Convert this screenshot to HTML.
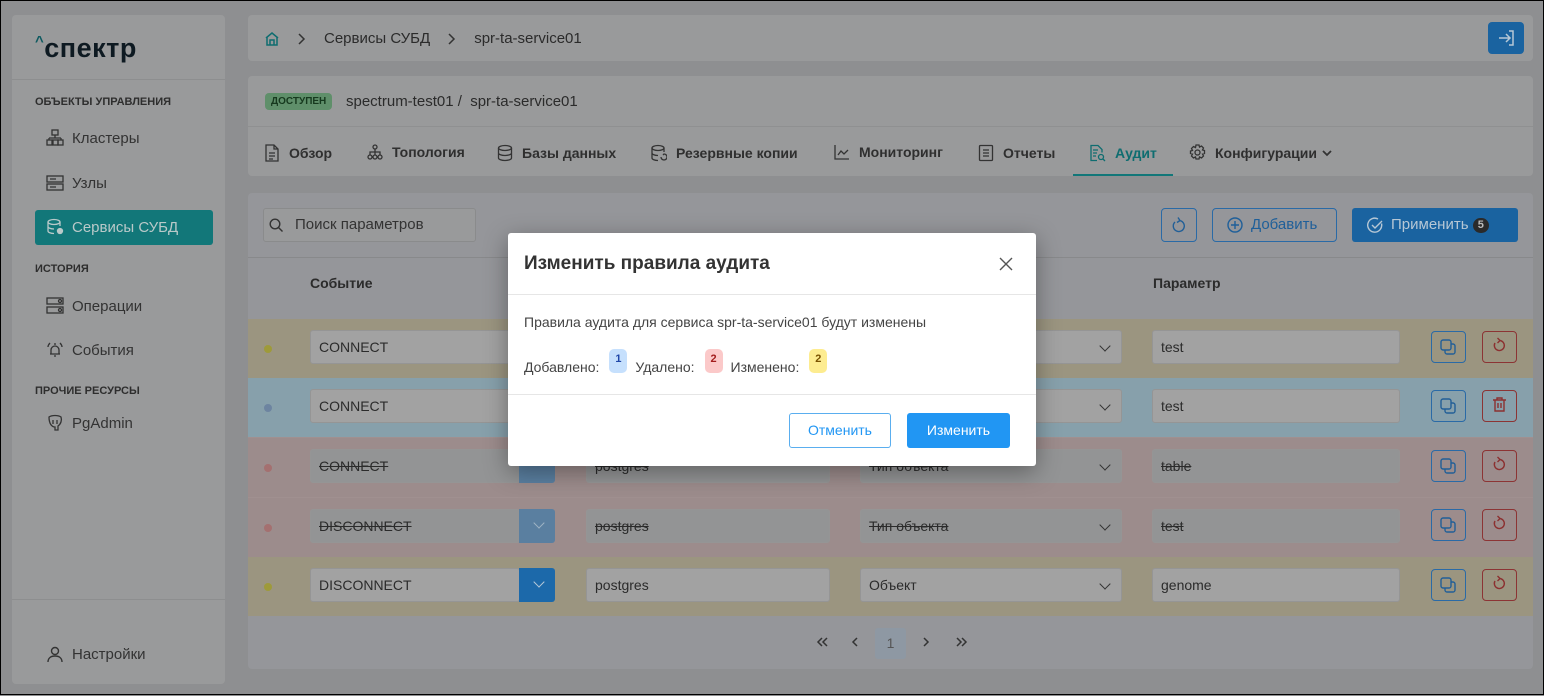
<!DOCTYPE html>
<html><head><meta charset="utf-8"><style>
*{box-sizing:border-box;margin:0;padding:0}
body{width:1544px;height:695px;overflow:hidden;background:#8e8f91;font-family:"Liberation Sans",sans-serif;color:#2b2b2b;position:relative;border:1px solid #000}
.a{position:absolute}
.card{position:absolute;background:#999a9b;border-radius:4px}
.sb-item{position:absolute;left:45px;font-size:15px;color:#333;display:flex;align-items:center;gap:8px}
.sec{position:absolute;left:34px;font-size:11px;font-weight:bold;color:#2e2e2e}
.tab{position:absolute;top:143px;font-size:14px;font-weight:bold;color:#2f2f2f;display:flex;align-items:center;gap:9px}
.tab svg{fill:none;stroke:#333;stroke-width:1.3}
.row{position:absolute;left:247px;width:1285px}
.inp{position:absolute;height:34px;background:#a2a2a2;border:1px solid #959595;border-radius:3px;font-size:14px;line-height:32px;padding-left:8px;color:#2b2b2b}
.del{background:#939495;text-decoration:line-through}
.dot{position:absolute;left:16px;width:8px;height:8px;border-radius:50%}
.dd{position:absolute;width:36px;height:34px;border-radius:0 3px 3px 0}
.ib{position:absolute;width:35px;height:32px;border-radius:4px;border:1px solid #2a6aa6}
.ibr{border-color:#8c3434}
.chev{position:absolute;right:12px;top:11px;width:8px;height:8px;border-right:1.5px solid #333;border-bottom:1.5px solid #333;transform:rotate(45deg)}
</style></head><body>
<!-- sidebar -->
<div class="card" style="left:11px;top:14px;width:213px;height:669px">
 <div class="a" style="left:23px;top:18px;font-size:27px;font-weight:bold;color:#0e1a22;letter-spacing:0.5px"><span style="font-size:15px;vertical-align:top;position:relative;top:0px;color:#0e5a60">^</span>спектр</div>
 <div class="a" style="left:0;top:64px;width:213px;height:1px;background:#8d8e8f"></div>
 <div class="a" style="left:0;top:584px;width:213px;height:1px;background:#8d8e8f"></div>
</div>
<div class="sec" style="top:95px">ОБЪЕКТЫ УПРАВЛЕНИЯ</div>
<div class="sb-item" style="top:128px"><svg width="18" height="18" viewBox="0 0 18 18" fill="none" stroke="#333" stroke-width="1.3"><rect x="6" y="1" width="6" height="5"/><path d="M9 6v3M3 9h12M3 9v2M15 9v2"/><rect x="1" y="11" width="5" height="5"/><rect x="7" y="11" width="5" height="5"/><rect x="12" y="11" width="5" height="5"/></svg>Кластеры</div>
<div class="sb-item" style="top:173px"><svg width="18" height="18" viewBox="0 0 18 18" fill="none" stroke="#333" stroke-width="1.3"><rect x="1" y="2" width="16" height="6"/><rect x="1" y="10" width="16" height="6"/><path d="M4 5h6M4 13h6"/></svg>Узлы</div>
<div class="a" style="left:34px;top:209px;width:178px;height:35px;background:#127779;border-radius:3px"></div>
<div class="sb-item" style="top:217px;color:#b9c9c9"><svg width="18" height="18" viewBox="0 0 18 18" fill="none" stroke="#b9c9c9" stroke-width="1.3"><ellipse cx="8" cy="4" rx="6" ry="2.5"/><path d="M2 4v9c0 1.4 2.7 2.5 6 2.5M14 4v4M2 8.5c0 1.4 2.7 2.5 6 2.5"/><circle cx="14" cy="13" r="2.5" fill="#b9c9c9"/></svg>Сервисы СУБД</div>
<div class="sec" style="top:262px">ИСТОРИЯ</div>
<div class="sb-item" style="top:296px"><svg width="18" height="18" viewBox="0 0 18 18" fill="none" stroke="#333" stroke-width="1.3"><rect x="1" y="1" width="16" height="6"/><rect x="1" y="10" width="16" height="6"/><circle cx="14" cy="4" r="1.5"/><circle cx="14" cy="13" r="1.5"/></svg>Операции</div>
<div class="sb-item" style="top:340px"><svg width="18" height="18" viewBox="0 0 18 18" fill="none" stroke="#333" stroke-width="1.3"><path d="M5 13V9a4 4 0 0 1 8 0v4M4 13h10M8 15h2M2 6c0-2 1-3 2-4M16 6c0-2-1-3-2-4M9 2v2"/></svg>События</div>
<div class="sec" style="top:384px">ПРОЧИЕ РЕСУРСЫ</div>
<div class="sb-item" style="top:413px"><svg width="18" height="18" viewBox="0 0 18 18" fill="none" stroke="#333" stroke-width="1.3"><path d="M3 3c3-2 9-2 12 0 1 3 0 7-3 9v4h-3v-3c-3 0-6-3-6-10zM7 6v4M11 6v4"/></svg>PgAdmin</div>
<div class="sb-item" style="top:644px"><svg width="18" height="18" viewBox="0 0 18 18" fill="none" stroke="#333" stroke-width="1.4"><circle cx="9" cy="6" r="3.5"/><path d="M2 17c0-4 3-6 7-6s7 2 7 6"/></svg>Настройки</div>

<!-- breadcrumb -->
<div class="card" style="left:247px;top:14px;width:1285px;height:46px"></div>
<div class="a" style="left:263px;top:29px;display:flex;align-items:center;gap:16px;font-size:15px;color:#2b2b2b">
 <svg width="16" height="16" viewBox="0 0 16 16" fill="none" stroke="#0f6d70" stroke-width="1.5"><path d="M2 7l6-5 6 5M3 6v8h10V6M6 14V9h4v5"/></svg>
 <svg width="12" height="14" viewBox="0 0 12 14" fill="none" stroke="#333" stroke-width="1.5"><path d="M3 2l5 5-5 5"/></svg><span>Сервисы СУБД</span><svg width="12" height="14" viewBox="0 0 12 14" fill="none" stroke="#333" stroke-width="1.5"><path d="M3 2l5 5-5 5"/></svg><span>spr-ta-service01</span></div>
<div class="a" style="left:1487px;top:21px;width:36px;height:32px;background:#1a63a0;border-radius:4px"><svg width="36" height="32" viewBox="0 0 36 32" fill="none" stroke="#b7c8d6" stroke-width="1.5"><path d="M11 16h11M18 12l4 4-4 4M21 9h4v14h-4"/></svg></div>

<!-- second card -->
<div class="card" style="left:247px;top:75px;width:1285px;height:100px">
 <div class="a" style="left:0;top:50px;width:1285px;height:1px;background:#8f9091"></div>
 <div class="a" style="left:825px;top:98px;width:100px;height:2px;background:#127779"></div>
</div>
<div class="a" style="left:264px;top:92px;background:#5f8f6a;color:#16391e;font-size:10px;font-weight:bold;padding:3px 6px;border-radius:4px">ДОСТУПЕН</div>
<div class="a" style="left:345px;top:92px;font-size:15px">spectrum-test01 /&nbsp; spr-ta-service01</div>
<div class="tab" style="left:263px"><svg width="16" height="18" viewBox="0 0 16 18"><path d="M2 1h8l4 4v12H2zM10 1v4h4M5 9h6M5 12h6M5 15h4"/></svg>Обзор</div>
<div class="tab" style="left:366px"><svg width="16" height="16" viewBox="0 0 16 16"><circle cx="8" cy="3" r="2"/><circle cx="3" cy="13" r="2"/><circle cx="8" cy="13" r="2"/><circle cx="13" cy="13" r="2"/><path d="M8 5v6M3 11V8h10v3"/></svg>Топология</div>
<div class="tab" style="left:496px"><svg width="16" height="18" viewBox="0 0 16 18"><ellipse cx="8" cy="4" rx="6.5" ry="2.5"/><path d="M1.5 4v10c0 1.4 2.9 2.5 6.5 2.5s6.5-1.1 6.5-2.5V4M1.5 9c0 1.4 2.9 2.5 6.5 2.5s6.5-1.1 6.5-2.5"/></svg>Базы данных</div>
<div class="tab" style="left:649px"><svg width="17" height="18" viewBox="0 0 17 18"><ellipse cx="8" cy="4" rx="6" ry="2.5"/><path d="M2 4v10c0 1.4 2.7 2.5 6 2.5M14 4v4M2 9c0 1.4 2.7 2.5 6 2.5M11 13a3 3 0 1 0 3-3l-1 1"/></svg>Резервные копии</div>
<div class="tab" style="left:833px"><svg width="16" height="16" viewBox="0 0 16 16"><path d="M1 1v14h14M4 11l3-4 3 3 4-4"/></svg>Мониторинг</div>
<div class="tab" style="left:977px"><svg width="16" height="18" viewBox="0 0 16 18"><rect x="1.5" y="1.5" width="13" height="15" rx="1"/><path d="M5 6h6M5 9h6M5 12h6"/></svg>Отчеты</div>
<div class="tab" style="left:1088px;color:#0f6d70"><svg width="17" height="18" viewBox="0 0 17 18" style="stroke:#0f6d70"><path d="M8 16.5H2V1.5h7l4 4v3M4 6h5M4 9h4M4 12h3"/><circle cx="12" cy="13" r="2.5"/><path d="M14 15l2 2"/></svg>Аудит</div>
<div class="tab" style="left:1188px"><svg width="17" height="17" viewBox="0 0 17 17"><circle cx="8.5" cy="8.5" r="2.5"/><path d="M7 1h3l.5 2 2-1 2 2-1 2 2 .5v3l-2 .5 1 2-2 2-2-1-.5 2H7l-.5-2-2 1-2-2 1-2-2-.5V7l2-.5-1-2 2-2 2 1z"/></svg>Конфигурации<svg width="12" height="12" viewBox="0 0 12 12" style="margin-left:-5px;stroke-width:1.8"><path d="M2 4l4 4 4-4"/></svg></div>

<!-- table card -->
<div class="card" style="left:247px;top:192px;width:1285px;height:476px;background:#95969a"></div>
<div class="a" style="left:247px;top:256px;width:1285px;height:1px;background:#88898b"></div>
<div class="inp" style="left:262px;top:207px;width:213px;background:#999a9b;border-color:#8a8b8c;padding-left:31px;color:#333;font-size:15px">Поиск параметров</div>
<svg class="a" style="left:268px;top:217px" width="15" height="15" viewBox="0 0 15 15" fill="none" stroke="#333" stroke-width="1.4"><circle cx="6" cy="6" r="4.8"/><path d="M9.5 9.5l4 4"/></svg>
<div class="ib" style="left:1160px;top:207px;height:34px;width:36px"></div>
<svg class="a" style="left:1170px;top:215px" width="16" height="18" viewBox="0 0 16 18" fill="none" stroke="#225f97" stroke-width="1.4"><path d="M4 6a5.5 5.5 0 1 0 4-1.5M7 1.5l2 3-3 2"/></svg>
<div class="a" style="left:1211px;top:207px;width:125px;height:34px;border:1px solid #2a6aa6;border-radius:4px;color:#1f5f99;font-size:15px;line-height:32px;padding-left:38px">Добавить</div>
<svg class="a" style="left:1226px;top:216px" width="16" height="16" viewBox="0 0 16 16" fill="none" stroke="#1f5f99" stroke-width="1.4"><circle cx="8" cy="8" r="7"/><path d="M8 4v8M4 8h8"/></svg>
<div class="a" style="left:1351px;top:207px;width:166px;height:34px;background:#1a63a0;border-radius:3px;color:#b6c7d5;font-size:15px;line-height:34px;padding-left:39px">Применить <span style="display:inline-block;background:#2a2a2a;color:#bbb;border-radius:8px;font-size:11px;font-weight:bold;line-height:15px;padding:0 5px;vertical-align:1px">5</span></div>
<svg class="a" style="left:1366px;top:216px" width="16" height="16" viewBox="0 0 16 16" fill="none" stroke="#b6c7d5" stroke-width="1.4"><path d="M14.5 6.5A7 7 0 1 1 11 2M5 8l3 3 7-7"/></svg>
<div class="a" style="left:309px;top:274px;font-size:14px;font-weight:bold">Событие</div>
<div class="a" style="left:1152px;top:274px;font-size:14px;font-weight:bold">Параметр</div>

<!-- rows -->
<div class="row" style="top:318px;height:59px;background:#9b9580"><div class="dot" style="top:26px;background:#9e9a3a"></div></div>
<div class="row" style="top:377px;height:59px;background:#87a0ab"><div class="dot" style="top:26px;background:#6d84a0"></div></div>
<div class="row" style="top:436px;height:60px;background:#9c8c8c;border-top:1px solid #a09090"><div class="dot" style="top:26px;background:#a47070"></div></div>
<div class="row" style="top:496px;height:60px;background:#9c8c8c;border-top:1px solid #a09090"><div class="dot" style="top:26px;background:#a47070"></div></div>
<div class="row" style="top:556px;height:59px;background:#9b9580"><div class="dot" style="top:26px;background:#9e9a3a"></div></div>

<div class="inp" style="left:309px;top:329px;width:220px">CONNECT</div>
<div class="inp" style="left:309px;top:388px;width:220px">CONNECT</div>
<div class="inp del" style="left:309px;top:448px;width:210px">CONNECT</div>
<div class="dd" style="left:518px;top:448px;background:#5a7fa0"></div>
<div class="inp del" style="left:309px;top:508px;width:210px">DISCONNECT</div>
<div class="dd" style="left:518px;top:508px;background:#5a7fa0"><div class="chev" style="border-color:#9fb3c4;top:10px"></div></div>
<div class="inp" style="left:309px;top:567px;width:210px">DISCONNECT</div>
<div class="dd" style="left:518px;top:567px;background:#1c69aa"><div class="chev" style="border-color:#b7c9d8;top:10px"></div></div>

<div class="inp del" style="left:585px;top:448px;width:244px">postgres</div>
<div class="inp del" style="left:585px;top:508px;width:244px">postgres</div>
<div class="inp" style="left:585px;top:567px;width:244px">postgres</div>

<div class="inp" style="left:859px;top:329px;width:262px"><div class="chev"></div></div>
<div class="inp" style="left:859px;top:388px;width:262px"><div class="chev"></div></div>
<div class="inp del" style="left:859px;top:448px;width:262px">Тип объекта<div class="chev"></div></div>
<div class="inp del" style="left:859px;top:508px;width:262px">Тип объекта<div class="chev"></div></div>
<div class="inp" style="left:859px;top:567px;width:262px">Объект<div class="chev"></div></div>

<div class="inp" style="left:1151px;top:329px;width:248px">test</div>
<div class="inp" style="left:1151px;top:388px;width:248px">test</div>
<div class="inp del" style="left:1151px;top:448px;width:248px">table</div>
<div class="inp del" style="left:1151px;top:508px;width:248px">test</div>
<div class="inp" style="left:1151px;top:567px;width:248px">genome</div>

<!-- action buttons -->
<div class="ib" style="left:1430px;top:330px"></div><div class="ib ibr" style="left:1481px;top:330px"></div>
<div class="ib" style="left:1430px;top:389px"></div><div class="ib ibr" style="left:1481px;top:389px"></div>
<div class="ib" style="left:1430px;top:449px"></div><div class="ib ibr" style="left:1481px;top:449px"></div>
<div class="ib" style="left:1430px;top:508px"></div><div class="ib ibr" style="left:1481px;top:508px"></div>
<div class="ib" style="left:1430px;top:568px"></div><div class="ib ibr" style="left:1481px;top:568px"></div>
<svg class="a" style="left:0;top:0" width="1544" height="695" fill="none" stroke-width="1.4">
 <g stroke="#225f97">
  <g transform="translate(1440,339)"><rect x="0" y="0" width="10" height="10" rx="2"/><path d="M4 10v2a2 2 0 0 0 2 2h6a2 2 0 0 0 2-2V6a2 2 0 0 0-2-2h-2"/></g>
  <g transform="translate(1440,398)"><rect x="0" y="0" width="10" height="10" rx="2"/><path d="M4 10v2a2 2 0 0 0 2 2h6a2 2 0 0 0 2-2V6a2 2 0 0 0-2-2h-2"/></g>
  <g transform="translate(1440,458)"><rect x="0" y="0" width="10" height="10" rx="2"/><path d="M4 10v2a2 2 0 0 0 2 2h6a2 2 0 0 0 2-2V6a2 2 0 0 0-2-2h-2"/></g>
  <g transform="translate(1440,517)"><rect x="0" y="0" width="10" height="10" rx="2"/><path d="M4 10v2a2 2 0 0 0 2 2h6a2 2 0 0 0 2-2V6a2 2 0 0 0-2-2h-2"/></g>
  <g transform="translate(1440,577)"><rect x="0" y="0" width="10" height="10" rx="2"/><path d="M4 10v2a2 2 0 0 0 2 2h6a2 2 0 0 0 2-2V6a2 2 0 0 0-2-2h-2"/></g>
 </g>
 <g stroke="#8c3030">
  <path d="M1494 342a5 5 0 1 0 4.5-2.5M1496.5 337l2.5 2.5-2.5 2.5"/>
  <path d="M1494 461a5 5 0 1 0 4.5-2.5M1496.5 456l2.5 2.5-2.5 2.5"/>
  <path d="M1494 520a5 5 0 1 0 4.5-2.5M1496.5 515l2.5 2.5-2.5 2.5"/>
  <path d="M1494 580a5 5 0 1 0 4.5-2.5M1496.5 575l2.5 2.5-2.5 2.5"/>
  <path d="M1492 399h13M1496 399v-2h5v2M1494 399v11h9v-11M1497 402v5M1500 402v5"/>
 </g>
 <g stroke="#333" stroke-width="1.5">
  <path d="M821 637l-4 4 4 4M826 637l-4 4 4 4"/>
  <path d="M856 637l-4 4 4 4"/>
  <path d="M923 637l4 4-4 4"/>
  <path d="M956 637l4 4-4 4M961 637l4 4-4 4"/>
 </g>
</svg>
<div class="a" style="left:874px;top:627px;width:31px;height:31px;background:#8e98a3;border-radius:3px;color:#555;font-size:14px;text-align:center;line-height:31px">1</div>

<!-- modal -->
<div class="a" style="left:507px;top:232px;width:528px;height:233px;background:#fff;border-radius:3px;box-shadow:0 6px 24px rgba(0,0,0,0.35)">
 <div class="a" style="left:16px;top:20px;font-size:19px;font-weight:bold;color:#333">Изменить правила аудита</div>
 <svg class="a" style="left:491px;top:24px" width="14" height="14" stroke="#555" stroke-width="1.4"><path d="M1 1l12 12M13 1L1 13"/></svg>
 <div class="a" style="left:0;top:61px;width:528px;height:1px;background:#e6e6e6"></div>
 <div class="a" style="left:16px;top:81px;font-size:14px;color:#444">Правила аудита для сервиса spr-ta-service01 будут изменены</div>
 <div class="a" style="left:16px;top:116px;font-size:14px;color:#444;display:flex;align-items:flex-end">
  <span style="padding-top:10px">Добавлено:</span>
  <span style="margin:0 8px 0 10px;background:#c6e0fd;color:#1f46a8;font-size:11px;font-weight:bold;border-radius:5px;width:18px;height:24px;text-align:center;line-height:20px;align-self:flex-start">1</span>
  <span>Удалено:</span>
  <span style="margin:0 8px 0 10px;background:#fbc9c9;color:#a31d1d;font-size:11px;font-weight:bold;border-radius:5px;width:18px;height:24px;text-align:center;line-height:20px;align-self:flex-start">2</span>
  <span>Изменено:</span>
  <span style="margin:0 0 0 10px;background:#fdec90;color:#7a5200;font-size:11px;font-weight:bold;border-radius:5px;width:18px;height:24px;text-align:center;line-height:20px;align-self:flex-start">2</span>
 </div>
 <div class="a" style="left:0;top:161px;width:528px;height:1px;background:#e6e6e6"></div>
 <div class="a" style="left:281px;top:180px;width:102px;height:35px;border:1px solid #5aaeef;border-radius:3px;color:#2196f3;font-size:14px;text-align:center;line-height:33px">Отменить</div>
 <div class="a" style="left:399px;top:180px;width:103px;height:35px;background:#2196f3;border-radius:3px;color:#fff;font-size:14px;text-align:center;line-height:35px">Изменить</div>
</div>
</body></html>
